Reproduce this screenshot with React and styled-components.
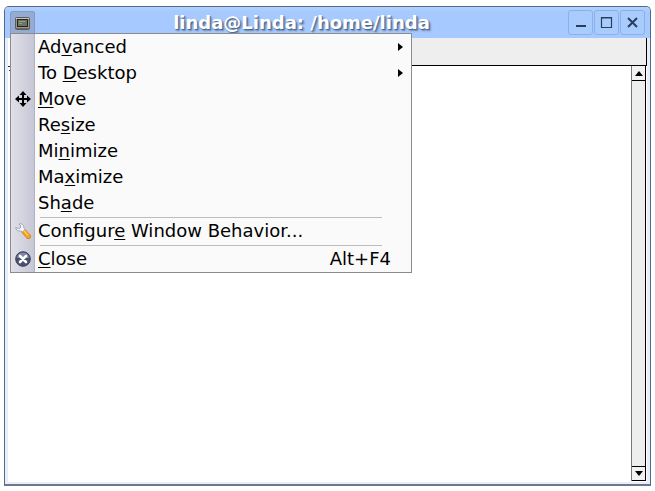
import styled, { createGlobalStyle } from "styled-components"

const GlobalStyle = createGlobalStyle`
    * {
        box-sizing: border-box;
    }
    body {
        margin: 0;
        background: #ffffff;
        font-family: "DejaVu Sans", sans-serif;
    }
`

const Desktop = styled.main`
    min-height: 100vh;
    display: flex;
    padding: 6px 4px 5px;
`

const Window = styled.section`
    position: relative;
    flex: 1;
    display: flex;
    flex-direction: column;
    border: 1px solid #50698f;
    border-bottom: 2px solid #6c7890;
    border-radius: 5px 5px 0 0;
    background: #e9edf9;
`

const TitleBar = styled.header`
    height: 31px;
    display: flex;
    align-items: center;
    justify-content: space-between;
    padding: 0 5px;
    border-radius: 4px 4px 0 0;
    background: linear-gradient(#b4d2fb, #a6caff 5px, #a6caff);
`

const SystemButton = styled.button`
    width: 25px;
    height: 24px;
    display: flex;
    align-items: center;
    justify-content: center;
    padding: 0;
    border: 1px solid #8799be;
    border-bottom: none;
    border-radius: 3px 3px 0 0;
    background: #94acd3;
`

const Title = styled.h1`
    margin: 0;
    font-size: 18px;
    line-height: 24px;
    font-weight: 700;
    color: #ffffff;
    text-shadow: 1px 1px 1px #4b6389, 2px 2px 2px #6d88b3;
`

const Controls = styled.div`
    display: flex;
    gap: 1px;
`

const ControlButton = styled.button`
    width: 25px;
    height: 25px;
    display: flex;
    padding: 0;
    border: 1px solid #8db0e6;
    border-radius: 3px;
    background: #a9ccfe;
`

const Client = styled.div`
    flex: 1;
    display: flex;
    flex-direction: column;
    margin: 0 3px 2px;
    background: #ffffff;
`

const MenuBar = styled.div`
    height: 28px;
    margin-left: 4px;
    border-right: 1px solid #000000;
    border-bottom: 1px solid #000000;
    background: #eeeeee;
`

const Terminal = styled.div`
    flex: 1;
    display: flex;
    justify-content: space-between;
    padding: 0 1px 1px 0;
`

const Prompt = styled.svg`
    width: 3px;
    height: 7px;
`

const ScrollBar = styled.div`
    width: 15px;
    display: flex;
    flex-direction: column;
    justify-content: space-between;
    border-left: 1px solid #777777;
    border-right: 1px solid #000000;
    background: #eeeeee;
`

const ScrollButton = styled.button`
    height: 15px;
    display: flex;
    align-items: center;
    justify-content: center;
    padding: 0;
    border: 0 solid #000000;
    border-width: ${({ $end }) => ($end ? "1px 0" : "0 0 1px")};
    background: #f2f2f2;
`

const Menu = styled.div`
    position: absolute;
    top: 26px;
    left: 5px;
    width: 402px;
    border: 1px solid #8b8b8f;
    background: linear-gradient(90deg, #dfe0e8, #c6c7d5 23px, #b2b3c1 23px, #b2b3c1 24px, #fafafa 24px);
`

const MenuItem = styled.button`
    width: 100%;
    height: 26px;
    display: grid;
    grid-template-columns: 24px 1fr auto;
    align-items: center;
    column-gap: 3px;
    padding: 0 ${({ $submenu }) => ($submenu ? 8 : 20)}px 0 0;
    border: none;
    background: none;
    color: #000000;
    font-family: inherit;
    font-size: 18px;
    line-height: 26px;
    text-align: left;
    white-space: nowrap;
`

const IconSlot = styled.span`
    height: 16px;
    display: flex;
    justify-content: center;
`

const Accel = styled.span`
    text-decoration: underline;
    text-decoration-thickness: 1px;
    text-underline-offset: 2px;
`

const Separator = styled.hr`
    height: 2px;
    margin: 0 29px;
    border: none;
    border-bottom: 1px solid #bdbdbd;
`

const TerminalIcon = () => (
    <svg width="15" height="13" viewBox="0 0 15 13" aria-hidden="true">
        <rect x="0.5" y="0.5" width="14" height="12" rx="1" fill="#9a978f" stroke="#5c5a55" />
        <path d="M1 1.5h13" stroke="#c9c6bf" />
        <rect x="2.5" y="2.5" width="10" height="7" fill="#6c7563" stroke="#22231f" />
        <path d="M4 4.5h6M4 6.5h3" stroke="#939c84" />
        <path d="M1 11.5h13" stroke="#6a6862" />
    </svg>
)

const MoveIcon = () => (
    <svg width="16" height="16" viewBox="0 0 16 16" aria-hidden="true">
        <path d="M8 2v12M2 8h12" stroke="#000" strokeWidth="2" />
        <path d="M8 0l3.5 4h-7zM8 16l3.5-4h-7zM0 8l4-3.5v7zM16 8l-4-3.5v7z" fill="#000" />
    </svg>
)

const WrenchIcon = () => (
    <svg width="16" height="16" viewBox="0 0 16 16" aria-hidden="true">
        <path d="M9 8.5l4.5 5" stroke="#cf8527" strokeWidth="5" strokeLinecap="round" />
        <path d="M9 8.3l4.2 4.8" stroke="#f9a11d" strokeWidth="4" strokeLinecap="round" />
        <path d="M9.2 8l3.4 4" stroke="#ffcf70" strokeWidth="1.2" strokeLinecap="round" />
        <path
            d="M4 1C6.5 0.2 9.2 2 8.8 4.8L10.2 6.6 7.4 9 5.6 7.9C3 8.6 0.6 7 0.8 4.2L3.2 5.8 5.4 5 5.8 2.8z"
            fill="#f6f7fa"
            stroke="#9497a5"
            strokeWidth="0.8"
        />
    </svg>
)

const CloseIcon = () => (
    <svg width="16" height="16" viewBox="0 0 16 16" aria-hidden="true">
        <circle cx="8" cy="8" r="7.3" fill="#4b5070" stroke="#3b3f5c" />
        <path d="M2 7a6 5.5 0 0 1 12 0z" fill="#8086a2" />
        <path d="M5 5l6 6M11 5l-6 6" stroke="#fff" strokeWidth="2.6" strokeLinecap="round" />
    </svg>
)

const SubmenuArrow = () => (
    <svg width="5" height="8" viewBox="0 0 5 8" aria-hidden="true">
        <path d="M0 0l5 4-5 4z" fill="#000" />
    </svg>
)

const controls = [
    { name: "Minimize", shape: <path d="M7 15h10" strokeWidth="2" /> },
    { name: "Maximize", shape: <path d="M6.5 6.500h10v10h-10zM6 7h11" strokeWidth="1.2" /> },
    { name: "Close", shape: <path d="M7 7l9 9M16 7l-9 9" strokeWidth="2" /> },
]

// each label is split around its accelerator letter
const menuGroups = [
    [
        { label: ["Ad", "v", "anced"], submenu: true },
        { label: ["To ", "D", "esktop"], submenu: true },
        { label: ["", "M", "ove"], icon: <MoveIcon /> },
        { label: ["Re", "s", "ize"] },
        { label: ["Mi", "n", "imize"] },
        { label: ["Ma", "x", "imize"] },
        { label: ["Sh", "a", "de"] },
    ],
    [{ label: ["Configur", "e", " Window Behavior..."], icon: <WrenchIcon /> }],
    [{ label: ["", "C", "lose"], icon: <CloseIcon />, shortcut: "Alt+F4" }],
]

const WindowMenu = () => (
    <Menu role="menu" aria-label="Window menu">
        {menuGroups.map((items, i) => (
            <div key={i} role="group">
                {i > 0 && <Separator />}
                {items.map(({ label, icon, submenu, shortcut }) => (
                    <MenuItem
                        key={label.join("")}
                        type="button"
                        role="menuitem"
                        aria-haspopup={submenu ? "menu" : undefined}
                        $submenu={submenu}
                    >
                        <IconSlot>{icon}</IconSlot>
                        <span>
                            {label[0]}
                            <Accel>{label[1]}</Accel>
                            {label[2]}
                        </span>
                        {submenu ? <SubmenuArrow /> : <span>{shortcut}</span>}
                    </MenuItem>
                ))}
            </div>
        ))}
    </Menu>
)

const App = () => (
    <>
        <GlobalStyle />
        <Desktop>
            <Window>
                <TitleBar>
                    <SystemButton type="button" aria-label="Window menu" aria-expanded="true">
                        <TerminalIcon />
                    </SystemButton>
                    <Title>linda@Linda: /home/linda</Title>
                    <Controls>
                        {controls.map(({ name, shape }) => (
                            <ControlButton key={name} type="button" aria-label={name}>
                                <svg width="23" height="23" viewBox="0 0 23 23" fill="none" stroke="#2c3d5c">
                                    {shape}
                                </svg>
                            </ControlButton>
                        ))}
                    </Controls>
                </TitleBar>
                <Client>
                    <MenuBar />
                    <Terminal>
                        <Prompt viewBox="0 0 3 7" aria-hidden="true">
                            <path d="M0 .5h3M1 4.5h2" stroke="#333" />
                        </Prompt>
                        <ScrollBar>
                            <ScrollButton type="button" aria-label="Scroll up">
                                <svg width="8" height="5" viewBox="0 0 8 5">
                                    <path d="M4 0l4 5H0z" />
                                </svg>
                            </ScrollButton>
                            <ScrollButton type="button" aria-label="Scroll down" $end>
                                <svg width="8" height="5" viewBox="0 0 8 5">
                                    <path d="M0 0h8L4 5z" />
                                </svg>
                            </ScrollButton>
                        </ScrollBar>
                    </Terminal>
                </Client>
                <WindowMenu />
            </Window>
        </Desktop>
    </>
)

export default App
